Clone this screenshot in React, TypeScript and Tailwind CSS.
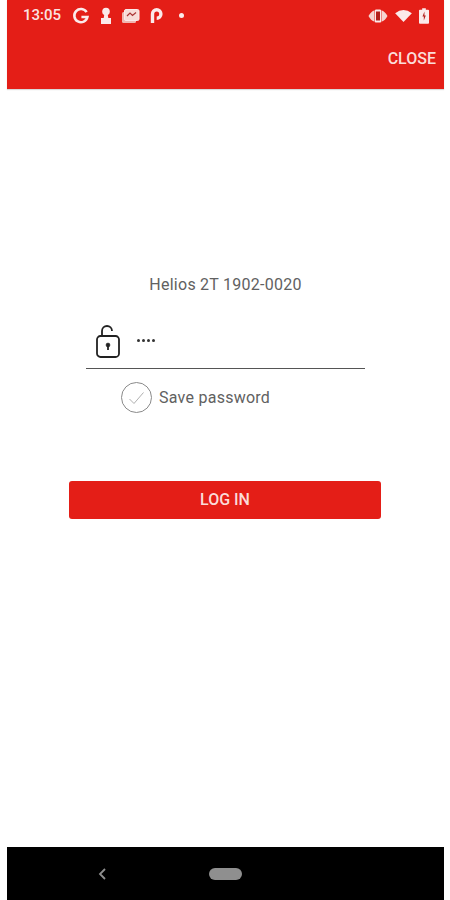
function StatusIcons() {
  return (
    <div className="flex items-center">
      {/* G */}
      <svg width="18" height="18" viewBox="0 0 18 18" className="ml-[11px]" fill="none">
        <path d="M14.6 5.2A6.6 6.6 0 1 0 15.4 10H9.4" stroke="#fbeaea" strokeWidth="2.6" />
      </svg>
      {/* keyhole */}
      <svg width="12" height="18" viewBox="0 0 12 18" className="ml-[10px]" fill="#fbeaea">
        <circle cx="6" cy="4.500" r="3.800" />
        <path d="M4.500 6h3l.8 5H11v6H1v-6h2.700z" />
      </svg>
      {/* photos */}
      <svg width="19" height="16" viewBox="0 0 19 16" className="ml-[9px]" fill="none">
        <rect x="1" y="4" width="14" height="11" rx="1.500" fill="#f0b6b0" />
        <rect x="3.500" y="1.500" width="14.500" height="11" rx="1.500" fill="#f7dcd8" stroke="#fbeaea" />
        <path d="M6 8l3-3 2.500 2.500L15 4.500" stroke="#a33" strokeWidth="1.200" />
      </svg>
      {/* P */}
      <svg width="16" height="18" viewBox="0 0 16 18" className="ml-[8px]" fill="none">
        <path d="M4.500 16V7a4.200 4.200 0 1 1 4.200 4.200" stroke="#fbeaea" strokeWidth="3.400" />
      </svg>
      <span className="ml-[15px] w-[5px] h-[5px] rounded-full bg-[#fbeaea]" />
    </div>
  )
}

function SystemIcons() {
  return (
    <div className="flex items-center gap-[7px]">
      {/* vibrate */}
      <svg width="20" height="14" viewBox="0 0 20 14">
        <path d="M0.500 7Q3 2.500 6 1.500V12.500Q3 11.500 0.500 7zM19.500 7Q17 2.500 14 1.500V12.500Q17 11.500 19.500 7z" fill="#f6d5d2" />
        <rect x="6.500" y="0.500" width="7" height="13" rx="1.500" fill="#fbeaea" />
        <rect x="8" y="2.500" width="4" height="9" fill="#b3201c" />
      </svg>
      {/* wifi */}
      <svg width="17" height="13" viewBox="0 0 18 14" fill="#fbeaea">
        <path d="M0 4.500Q9 -2.500 18 4.500L9 14z" />
      </svg>
      {/* battery */}
      <svg width="10" height="16" viewBox="0 0 11 17">
        <path d="M3.500 0h4v1.500H10a1 1 0 0 1 1 1V16a1 1 0 0 1-1 1H1a1 1 0 0 1-1-1V2.500a1 1 0 0 1 1-1h2.500z" fill="#fbeaea" />
        <path d="M6 3.500L3.800 9h1.500v4.500L7.500 8H6z" fill="#b3201c" />
      </svg>
    </div>
  )
}

export default function App() {
  return (
    <div className="w-[450px] h-[900px] bg-white pl-[7px] pr-[6px] flex flex-col font-['Roboto',sans-serif] overflow-hidden">
      {/* Header */}
      <div className="h-[89px] shrink-0 bg-[#e41e17] shadow-[0_1px_1px_rgba(0,0,0,0.15)]">
        <div className="flex items-center justify-between pt-[1px] pl-[16px] pr-[15px] h-[30px]">
          <div className="flex items-center">
            <span className="text-[15px] font-medium text-[#fbe3e1]">13:05</span>
            <StatusIcons />
          </div>
          <SystemIcons />
        </div>
        <div className="flex justify-end pt-[15px] pr-[8px]">
          <span className="text-[16px] leading-[28px] font-medium text-[#fbdcd9]">CLOSE</span>
        </div>
      </div>

      {/* Login form */}
      <div className="flex-1 flex flex-col items-center pt-[187px]">
        <p className="text-[16px] leading-[18px] tracking-[0.25px] text-[#616161]">Helios 2T 1902-0020</p>

        <div className="w-[279px] h-[69px] mt-[6px] border-b border-[#555] flex items-start pt-[25px]">
          <svg width="26" height="34" viewBox="0 0 26 34" fill="none" className="ml-[9px]" stroke="#222">
            <rect x="2" y="11" width="22" height="21" rx="3.500" strokeWidth="1.800" />
            <path d="M7 11V6a5 5 0 0 1 10 0" strokeWidth="1.800" />
            <circle cx="13" cy="20" r="2" fill="#222" strokeWidth="0.500" />
            <path d="M13 21v4" strokeWidth="1.800" />
          </svg>
          <span className="ml-[16px] mt-[14px] flex gap-[2px]">
            <span className="w-[3px] h-[3px] rounded-full bg-[#333]" />
            <span className="w-[3px] h-[3px] rounded-full bg-[#333]" />
            <span className="w-[3px] h-[3px] rounded-full bg-[#333]" />
            <span className="w-[3px] h-[3px] rounded-full bg-[#333]" />
          </span>
        </div>

        <div className="w-[279px] flex items-center mt-[13px] pl-[35px]">
          <div className="w-[31px] h-[31px] rounded-full border border-[#8a8a8a] flex items-center justify-center">
            <svg width="17" height="14" viewBox="0 0 17 14" fill="none" stroke="#b0b0b0" strokeWidth="1">
              <path d="M1.500 8l4.500 4.500L15.500 1.500" />
            </svg>
          </div>
          <span className="ml-[7px] text-[16px] tracking-[0.25px] text-[#616161]">Save password</span>
        </div>

        <button className="w-[312px] h-[38px] mt-[68px] -ml-[1px] rounded-[3px] bg-[#e41e17] text-[16px] font-medium text-[#fbdcd9]">
          LOG IN
        </button>
      </div>

      {/* Nav bar */}
      <div className="h-[53px] shrink-0 bg-black flex items-center gap-[103px] pl-[91px]">
        <svg width="8" height="12" viewBox="0 0 8 12" fill="none" stroke="#8f8f8f" strokeWidth="1.800">
          <path d="M7 1L2 6l5 5" />
        </svg>
        <div className="w-[33px] h-[12px] rounded-full bg-[#8f8f8f]" />
      </div>
    </div>
  )
}
